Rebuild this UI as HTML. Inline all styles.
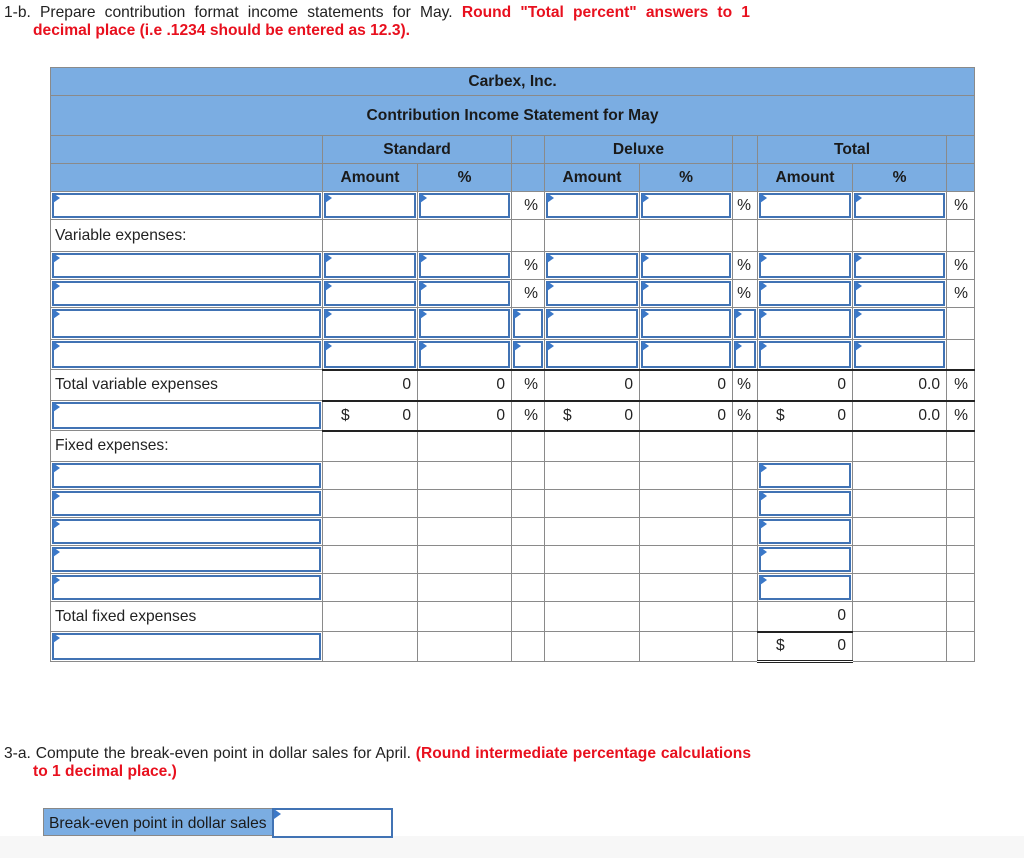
<!DOCTYPE html>
<html><head><meta charset="utf-8"><style>
body{margin:0;width:1024px;height:858px;background:#fff;font-family:"Liberation Sans",Arial,sans-serif;color:#222;position:relative;overflow:hidden}
.p{position:absolute;font-size:15.6px;line-height:18px}
.r{color:#e8101e;font-weight:bold}
table{position:absolute;left:50px;top:67px;border-collapse:collapse;table-layout:fixed;width:925px}
td{border:1px solid #8a8a8a;padding:0;position:relative;font-size:15.6px;white-space:nowrap;overflow:visible}
.h{background:#7badE2;font-weight:bold;text-align:center;color:#1a1a1a}
.in::after{content:"";position:absolute;left:1px;top:1px;right:1px;bottom:1px;border:2px solid #4173b4;background:#fff}
.in::before{content:"";position:absolute;left:2px;top:2px;border-left:7px solid #3b78c8;border-top:5px solid transparent;border-bottom:5px solid transparent;z-index:2;margin-top:-1px}
.pc{text-align:right;padding-right:6px}
.n{text-align:right;padding-right:6px}
.l{padding-left:4px}
.d{position:absolute;left:18px;top:50%;transform:translateY(-50%)}
.bt{border-top:2px solid #222}
</style></head><body>
<div class="p" style="left:4px;top:4px;width:746px;text-align:justify;text-align-last:justify">1-b. Prepare contribution format income statements for May. <span class="r">Round "Total percent" answers to 1</span></div>
<div class="p r" style="left:33px;top:22px">decimal place (i.e .1234 should be entered as 12.3).</div>

<table>
<colgroup><col style="width:272px"><col style="width:95px"><col style="width:94px"><col style="width:33px"><col style="width:95px"><col style="width:93px"><col style="width:25px"><col style="width:95px"><col style="width:94px"><col style="width:28px"></colgroup>
<tr style="height:28px"><td class="h" colspan="10">Carbex, Inc.</td></tr>
<tr style="height:40px"><td class="h" colspan="10">Contribution Income Statement for May</td></tr>
<tr style="height:28px"><td class="h"></td><td class="h" colspan="2">Standard</td><td class="h"></td><td class="h" colspan="2">Deluxe</td><td class="h"></td><td class="h" colspan="2">Total</td><td class="h"></td></tr>
<tr style="height:28px"><td class="h"></td><td class="h">Amount</td><td class="h">%</td><td class="h"></td><td class="h">Amount</td><td class="h">%</td><td class="h"></td><td class="h">Amount</td><td class="h">%</td><td class="h"></td></tr>
<tr style="height:28px"><td class="in"></td><td class="in"></td><td class="in"></td><td class="pc">%</td><td class="in"></td><td class="in"></td><td class="pc">%</td><td class="in"></td><td class="in"></td><td class="pc">%</td></tr>
<tr style="height:32px"><td class="l">Variable expenses:</td><td></td><td></td><td></td><td></td><td></td><td></td><td></td><td></td><td></td></tr>
<tr style="height:28px"><td class="in"></td><td class="in"></td><td class="in"></td><td class="pc">%</td><td class="in"></td><td class="in"></td><td class="pc">%</td><td class="in"></td><td class="in"></td><td class="pc">%</td></tr>
<tr style="height:28px"><td class="in"></td><td class="in"></td><td class="in"></td><td class="pc">%</td><td class="in"></td><td class="in"></td><td class="pc">%</td><td class="in"></td><td class="in"></td><td class="pc">%</td></tr>
<tr style="height:32px"><td class="in"></td><td class="in"></td><td class="in"></td><td class="in"></td><td class="in"></td><td class="in"></td><td class="in"></td><td class="in"></td><td class="in"></td><td></td></tr>
<tr style="height:30px"><td class="in"></td><td class="in"></td><td class="in"></td><td class="in"></td><td class="in"></td><td class="in"></td><td class="in"></td><td class="in"></td><td class="in"></td><td></td></tr>
<tr style="height:31px"><td class="l">Total variable expenses</td><td class="n bt">0</td><td class="n bt">0</td><td class="pc bt">%</td><td class="n bt">0</td><td class="n bt">0</td><td class="pc bt">%</td><td class="n bt">0</td><td class="n bt">0.0</td><td class="pc bt">%</td></tr>
<tr style="height:30px"><td class="in"></td><td class="n bt"><span class="d">$</span>0</td><td class="n bt">0</td><td class="pc bt">%</td><td class="n bt"><span class="d">$</span>0</td><td class="n bt">0</td><td class="pc bt">%</td><td class="n bt"><span class="d">$</span>0</td><td class="n bt">0.0</td><td class="pc bt">%</td></tr>
<tr style="height:31px"><td class="l">Fixed expenses:</td><td class="bt"></td><td class="bt"></td><td class="bt"></td><td class="bt"></td><td class="bt"></td><td class="bt"></td><td class="bt"></td><td class="bt"></td><td class="bt"></td></tr>
<tr style="height:28px"><td class="in"></td><td></td><td></td><td></td><td></td><td></td><td></td><td class="in"></td><td></td><td></td></tr>
<tr style="height:28px"><td class="in"></td><td></td><td></td><td></td><td></td><td></td><td></td><td class="in"></td><td></td><td></td></tr>
<tr style="height:28px"><td class="in"></td><td></td><td></td><td></td><td></td><td></td><td></td><td class="in"></td><td></td><td></td></tr>
<tr style="height:28px"><td class="in"></td><td></td><td></td><td></td><td></td><td></td><td></td><td class="in"></td><td></td><td></td></tr>
<tr style="height:28px"><td class="in"></td><td></td><td></td><td></td><td></td><td></td><td></td><td class="in"></td><td></td><td></td></tr>
<tr style="height:30px"><td class="l">Total fixed expenses</td><td></td><td></td><td></td><td></td><td></td><td></td><td class="n">0</td><td></td><td></td></tr>
<tr style="height:30px"><td class="in"></td><td></td><td></td><td></td><td></td><td></td><td></td><td class="n bt" style="border-bottom:3px double #222"><span class="d">$</span>0</td><td></td><td></td></tr>
</table>

<div class="p" style="left:4px;top:745px;width:747px;text-align:justify;text-align-last:justify">3-a. Compute the break-even point in dollar sales for April. <span class="r">(Round intermediate percentage calculations</span></div>
<div class="p r" style="left:33px;top:763px">to 1 decimal place.)</div>
<div style="position:absolute;left:0;top:836px;width:1024px;height:22px;background:#f7f7f7"></div>
<div style="position:absolute;left:43px;top:808px;width:229px;height:28px;background:#7badE2;border:1px solid #888;border-right:none;font-size:15.6px;line-height:30px;padding-left:5px;box-sizing:border-box;color:#1a1a1a;white-space:nowrap">Break-even point in dollar sales</div>
<div style="position:absolute;left:272px;top:808px;width:121px;height:30px;border:2px solid #4173b4;box-sizing:border-box;background:#fff"></div>
<div style="position:absolute;left:274px;top:809px;border-left:7px solid #3b78c8;border-top:5px solid transparent;border-bottom:5px solid transparent"></div>
</body></html>
